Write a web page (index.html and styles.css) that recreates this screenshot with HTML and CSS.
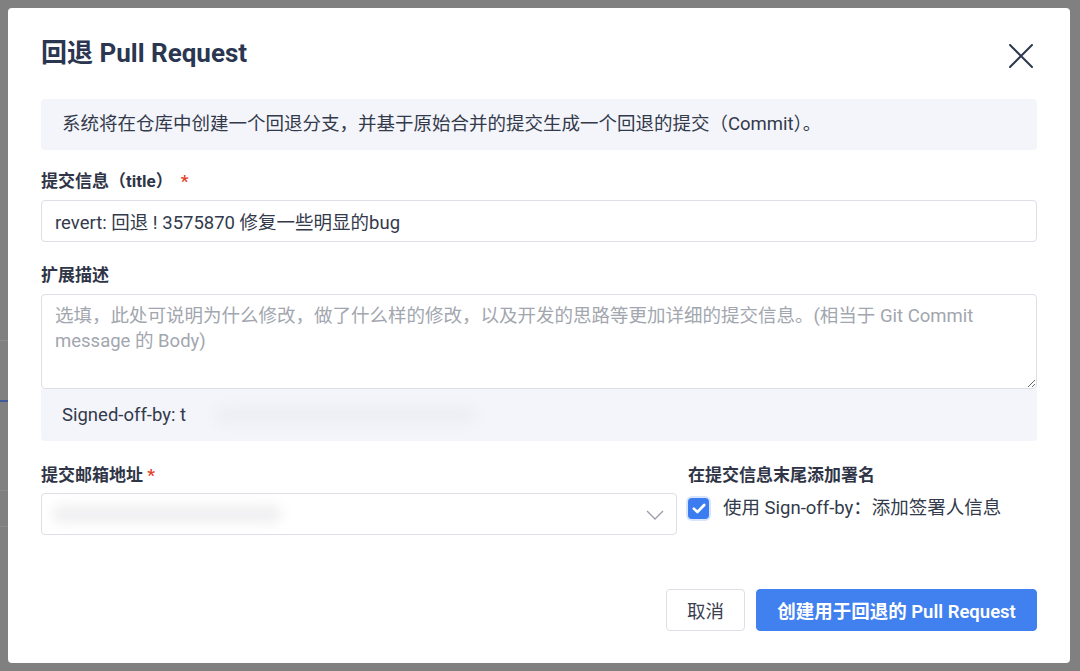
FILE: index.html
```html
<!DOCTYPE html>
<html lang="zh-CN">
<head>
<meta charset="utf-8">
<title>回退 Pull Request</title>
<link rel="stylesheet" href="styles.css">
</head>
<body>
<div class="backdrop">
  <div class="modal">
    <div class="modal-header">
      <h1 class="modal-title">回退 Pull Request</h1>
      <button class="close-btn" aria-label="关闭">
        <svg width="24" height="24" viewBox="0 0 24 24"><path d="M1 1 L23 23 M23 1 L1 23" stroke="#2e3850" stroke-width="2" fill="none" stroke-linecap="round"/></svg>
      </button>
    </div>

    <div class="info-box">系统将在仓库中创建一个回退分支，并基于原始合并的提交生成一个回退的提交（Commit）。</div>

    <div class="field field-title">
      <label class="field-label">提交信息（title）<span class="req">*</span></label>
      <input class="text-input" type="text" value="revert: 回退 ! 3575870 修复一些明显的bug">
    </div>

    <div class="field field-desc">
      <label class="field-label">扩展描述</label>
      <div class="textarea-group">
        <textarea class="textarea" placeholder="选填，此处可说明为什么修改，做了什么样的修改，以及开发的思路等更加详细的提交信息。(相当于 Git Commit&#10;message 的 Body)"></textarea>
        <div class="signed-box">Signed-off-by: t<span class="blur blur-signed"></span></div>
      </div>
    </div>

    <div class="field-row">
      <div class="field">
        <label class="field-label">提交邮箱地址 <span class="req req-tight">*</span></label>
        <div class="select">
          <span class="blur blur-select"></span>
          <svg class="chevron" width="18" height="10" viewBox="0 0 18 10"><path d="M1 1 L9 9 L17 1" stroke="#9a9ea8" stroke-width="1.3" fill="none"/></svg>
        </div>
      </div>
      <div class="field">
        <label class="field-label">在提交信息末尾添加署名</label>
        <div class="check-row">
          <span class="checkbox">
            <svg width="14" height="11" viewBox="0 0 14 11"><path d="M1.8 5.6 L5.4 9 L12.2 2" stroke="#fff" stroke-width="2.6" fill="none" stroke-linecap="round" stroke-linejoin="round"/></svg>
          </span>
          <span class="check-text">使用 Sign-off-by：添加签署人信息</span>
        </div>
      </div>
    </div>

    <div class="modal-footer">
      <button class="btn btn-default">取消</button>
      <button class="btn btn-primary">创建用于回退的 Pull Request</button>
    </div>
  </div>
</div>
</body>
</html>
```

FILE: styles.css
```css
* { box-sizing: border-box; }
html, body { margin: 0; padding: 0; }
body {
  background: #808080;
  font-family: "Roboto", "Noto Sans CJK SC", sans-serif;
  color: #333a4b;
  width: 1080px;
  height: 671px;
  overflow: hidden;
}
.backdrop {
  padding: 8px 10px 8px 8px;
  height: 671px;
  background:
    linear-gradient(#8a8a8a, #8a8a8a) 0 340px / 8px 1px no-repeat,
    linear-gradient(#3d5a9a, #3d5a9a) 0 400px / 8px 2px no-repeat,
    linear-gradient(#8a8a8a, #8a8a8a) 0 490px / 8px 1px no-repeat,
    linear-gradient(#8a8a8a, #8a8a8a) 0 526px / 8px 1px no-repeat,
    #808080;
}
.modal {
  background: #fff;
  border-radius: 4px;
  width: 1062px;
  height: 655px;
  padding: 28px 33px 0 33px;
}
.modal-header {
  display: flex;
  align-items: center;
  justify-content: space-between;
  height: 34px;
}
.modal-title {
  margin: 0;
  font-size: 26px;
  line-height: 34px;
  font-weight: 700;
  color: #2b3651;
}
.close-btn {
  border: 0;
  background: none;
  padding: 0;
  margin-right: 4px;
  margin-top: 6px;
  width: 24px;
  height: 24px;
  display: flex;
}
.info-box {
  margin-top: 29px;
  background: #f3f5fa;
  border-radius: 4px;
  padding: 13px 21px;
  font-size: 18.5px;
  line-height: 25px;
  color: #333a4b;
}
.field { display: flex; flex-direction: column; }
.field-label {
  font-size: 17px;
  line-height: 24px;
  font-weight: 700;
  color: #2f3547;
}
.field-title .field-label { margin-top: 19px; }
.field-desc .field-label { margin-top: 21px; }
.req { color: #e2432a; margin-left: 8px; font-weight: 700; }
.req-tight { margin-left: 0; }
.text-input {
  margin-top: 7px;
  height: 42px;
  border: 1px solid #dcdfe6;
  border-radius: 4px;
  padding: 0 13px;
  font-family: inherit;
  font-size: 18.5px;
  color: #333a4b;
  outline: none;
}
.textarea-group { margin-top: 7px; display: flex; flex-direction: column; }
.textarea {
  height: 95px;
  border: 1px solid #dcdfe6;
  border-radius: 4px;
  padding: 9px 13px;
  font-family: inherit;
  font-size: 18.5px;
  line-height: 25px;
  color: #333a4b;
  outline: none;
  resize: vertical;
}
.textarea::placeholder { color: #a2a6ae; }
.signed-box {
  height: 52px;
  background: #f3f5fa;
  border-radius: 0 0 4px 4px;
  padding: 0 21px;
  display: flex;
  align-items: center;
  font-size: 18.5px;
  color: #333a4b;
}
.blur {
  display: inline-block;
  background: #e4e6ea;
  filter: blur(6px);
  border-radius: 10px;
}
.blur-signed { width: 260px; height: 16px; margin-left: 30px; background: #eceef3; }
.field-row {
  display: grid;
  grid-template-columns: 636px 1fr;
  column-gap: 11px;
}
.field-row .field-label { margin-top: 22px; }
.select {
  margin-top: 6px;
  height: 42px;
  border: 1px solid #dcdfe6;
  border-radius: 4px;
  display: flex;
  align-items: center;
  justify-content: space-between;
  padding: 0 12px 0 10px;
}
.blur-select { width: 230px; height: 18px; background: #f0f0f2; }
.chevron { margin-top: 2px; }
.check-row {
  margin-top: 9px;
  display: flex;
  align-items: center;
  gap: 14px;
}
.checkbox {
  width: 21px;
  height: 21px;
  background: #3b7cf0;
  border-radius: 4px;
  display: flex;
  align-items: center;
  justify-content: center;
  box-shadow: 0 0 0 2px #d8e5fb;
}
.check-text { font-size: 18.5px; line-height: 24px; color: #333a4b; }
.modal-footer {
  margin-top: 54px;
  display: flex;
  justify-content: flex-end;
  gap: 11px;
}
.btn {
  height: 42px;
  border-radius: 4px;
  font-family: inherit;
  font-size: 18.5px;
  padding: 0 21px;
  cursor: pointer;
}
.btn-default {
  background: #fff;
  border: 1px solid #dcdfe6;
  color: #3a4050;
  width: 79px;
  padding: 0;
}
.btn-primary {
  background: #4080ef;
  border: 1px solid #4080ef;
  color: #fff;
  font-weight: 600;
  width: 281px;
  padding: 0;
}
```
